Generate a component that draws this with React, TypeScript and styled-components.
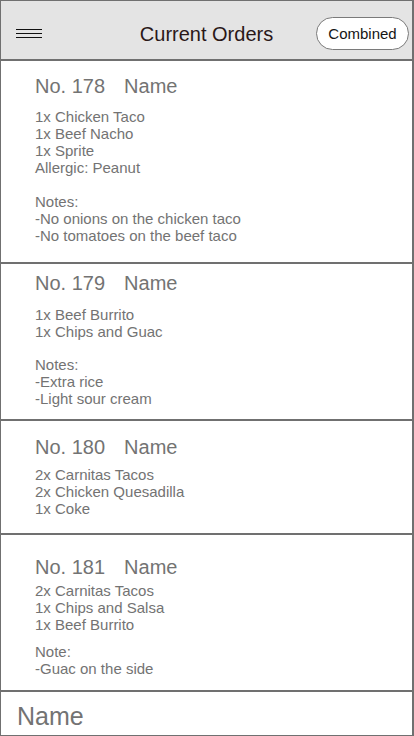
import React from "react";
import styled, { createGlobalStyle } from "styled-components";

const GlobalStyle = createGlobalStyle`
  html, body { margin: 0; padding: 0; background: #ffffff; }
  body { font-family: "Liberation Sans", Arial, sans-serif; }
  * { box-sizing: border-box; }
`;

const Frame = styled.div`
  width: 414px;
  height: 736px;
  border: 1px solid #707070;
  border-right-width: 2px;
  display: flex;
  flex-direction: column;
  overflow: hidden;
  background: #ffffff;
`;

const Header = styled.header`
  height: 60px;
  flex: none;
  background: #e4e4e4;
  border-bottom: 2px solid #707070;
  padding-top: 7px;
  display: grid;
  grid-template-columns: 1fr auto 1fr;
  align-items: center;
`;

const Burger = styled.button`
  justify-self: start;
  margin-left: 15px;
  width: 26px;
  height: 9px;
  padding: 0;
  border: none;
  background: transparent;
  display: flex;
  flex-direction: column;
  justify-content: space-between;
  cursor: pointer;
`;

const BurgerLine = styled.span`
  display: block;
  height: 1px;
  width: 100%;
  background: #111111;
`;

const Title = styled.h1`
  margin: 0;
  font-size: 20px;
  font-weight: 400;
  color: #2a1818;
  line-height: 24px;
`;

const PillButton = styled.button`
  justify-self: end;
  margin-right: 3px;
  width: 93px;
  height: 33px;
  border: 1px solid #7a7a7a;
  border-radius: 17px;
  background: #ffffff;
  font-family: "Liberation Sans", Arial, sans-serif;
  font-size: 15px;
  color: #151515;
  padding: 0;
  cursor: pointer;
`;

const Card = styled.section<{ $pt: number; $pb: number }>`
  flex: none;
  border-bottom: 2px solid #707070;
  padding: ${(p) => p.$pt}px 0 ${(p) => p.$pb}px 34px;
  color: #737373;
`;

const OrderHead = styled.div<{ $gap: number }>`
  display: flex;
  gap: 19px;
  font-size: 20px;
  line-height: 22px;
  margin-bottom: ${(p) => p.$gap}px;
`;

const Lines = styled.div<{ $mt?: number }>`
  font-size: 15px;
  line-height: 17px;
  margin-top: ${(p) => p.$mt ?? 0}px;
`;

const Line = styled.div``;

const Footer = styled.div`
  flex: 1;
  padding: 9px 0 0 16px;
  font-size: 25px;
  line-height: 30px;
  color: #737373;
`;

type Order = {
  no: number;
  items: string[];
  notes?: string[];
  pt: number;
  gap: number;
  notesGap?: number;
  pb: number;
};

const orders: Order[] = [
  {
    no: 178,
    items: ["1x Chicken Taco", "1x Beef Nacho", "1x Sprite", "Allergic: Peanut"],
    notes: ["Notes:", "-No onions on the chicken taco", "-No tomatoes on the beef taco"],
    pt: 14,
    gap: 11,
    notesGap: 17,
    pb: 18,
  },
  {
    no: 179,
    items: ["1x Beef Burrito", "1x Chips and Guac"],
    notes: ["Notes:", "-Extra rice", "-Light sour cream"],
    pt: 8,
    gap: 12,
    notesGap: 16,
    pb: 12,
  },
  {
    no: 180,
    items: ["2x Carnitas Tacos", "2x Chicken Quesadilla", "1x Coke"],
    pt: 15,
    gap: 8,
    pb: 16,
  },
  {
    no: 181,
    items: ["2x Carnitas Tacos", "1x Chips and Salsa", "1x Beef Burrito"],
    notes: ["Note:", "-Guac on the side"],
    pt: 21,
    gap: 4,
    notesGap: 10,
    pb: 13,
  },
];

export default function App() {
  return (
    <>
      <GlobalStyle />
      <Frame>
        <Header>
          <Burger aria-label="Menu">
            <BurgerLine />
            <BurgerLine />
            <BurgerLine />
          </Burger>
          <Title>Current Orders</Title>
          <PillButton>Combined</PillButton>
        </Header>
        {orders.map((o) => (
          <Card key={o.no} $pt={o.pt} $pb={o.pb}>
            <OrderHead $gap={o.gap}>
              <span>No. {o.no}</span>
              <span>Name</span>
            </OrderHead>
            <Lines>
              {o.items.map((t) => (
                <Line key={t}>{t}</Line>
              ))}
            </Lines>
            {o.notes && (
              <Lines $mt={o.notesGap}>
                {o.notes.map((t) => (
                  <Line key={t}>{t}</Line>
                ))}
              </Lines>
            )}
          </Card>
        ))}
        <Footer>Name</Footer>
      </Frame>
    </>
  );
}
